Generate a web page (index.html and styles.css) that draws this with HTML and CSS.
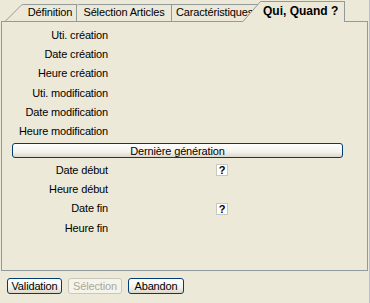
FILE: index.html
```html
<!DOCTYPE html>
<html lang="fr">
<head>
<meta charset="utf-8">
<title>Qui, Quand ?</title>
<link rel="stylesheet" href="styles.css">
</head>
<body>
<div class="window">
  <div class="tabs">
    <svg class="slant-first" width="24" height="21" viewBox="0 0 24 21"><path d="M5.5 21 L21 5.5 Q22 4.5 24 4.5" stroke="#919B9C" fill="none"/></svg>
    <div class="tab t1">Définition</div>
    <div class="tab t2">Sélection Articles</div>
    <div class="tab t3">Caractéristiques</div>
    <div class="tab-active">
      <svg class="slant" width="19" height="21" viewBox="0 0 19 21"><polygon points="0,21 19,0 19,21" fill="#ECE9D8"/><path d="M0.5 21 L18.5 0.5 L19 0.5" stroke="#919B9C" fill="none"/></svg>
      <div class="active-label">Qui, Quand ?</div>
    </div>
  </div>
  <div class="panel">
    <div class="form">
      <div class="lbl">Uti. création</div><div class="fld"></div>
      <div class="lbl">Date création</div><div class="fld"></div>
      <div class="lbl">Heure création</div><div class="fld"></div>
      <div class="lbl">Uti. modification</div><div class="fld"></div>
      <div class="lbl">Date modification</div><div class="fld"></div>
      <div class="lbl">Heure modification</div><div class="fld"></div>
      <button class="wide-btn">Dernière génération</button>
      <div class="lbl">Date début</div><div class="fld"><span class="help">?</span></div>
      <div class="lbl">Heure début</div><div class="fld"></div>
      <div class="lbl">Date fin</div><div class="fld"><span class="help">?</span></div>
      <div class="lbl">Heure fin</div><div class="fld"></div>
    </div>
  </div>
  <div class="footer">
    <button class="btn b-valid">Validation</button>
    <button class="btn b-sel" disabled>Sélection</button>
    <button class="btn b-aband">Abandon</button>
  </div>
</div>
</body>
</html>
```

FILE: styles.css
```css
html, body {
  margin: 0;
  padding: 0;
}
body {
  width: 370px;
  height: 303px;
  background: #ECE9D8;
  font-family: "Liberation Sans", Arial, sans-serif;
  font-size: 11px;
  letter-spacing: -0.15px;
  color: #000;
  overflow: hidden;
}
.window {
  width: 370px;
  height: 303px;
  box-sizing: border-box;
  border-right: 1px solid #A9C0EC;
  display: flex;
  flex-direction: column;
}
.tabs {
  display: flex;
  align-items: flex-end;
  height: 21px;
  flex: none;
}
.slant-first {
  display: block;
  flex: none;
}
.tab {
  box-sizing: border-box;
  height: 17px;
  border-top: 1px solid #919B9C;
  border-right: 1px solid #919B9C;
  padding-top: 1px;
  line-height: 13px;
  white-space: nowrap;
  flex: none;
}
.t1 { width: 53px; text-align: center; }
.t2 { width: 95px; text-align: center; border-top-left-radius: 2px; }
.t3 { width: 90px; padding-left: 4px; overflow: hidden; border-right: none; }
.tab-active {
  position: relative;
  display: flex;
  height: 21px;
  margin-left: -20px;
  margin-bottom: -1px;
  flex: none;
}
.slant {
  display: block;
  flex: none;
}
.active-label {
  box-sizing: border-box;
  width: 84px;
  height: 21px;
  border-top: 1px solid #919B9C;
  border-right: 1px solid #919B9C;
  background: #ECE9D8;
  padding: 3px 0 0 2px;
  line-height: 13px;
  font-size: 12px;
  font-weight: bold;
  letter-spacing: 0;
  white-space: nowrap;
}
.panel {
  box-sizing: border-box;
  margin-left: 1px;
  width: 367px;
  height: 250px;
  border: 1px solid #919B9C;
  flex: none;
}
.form {
  display: grid;
  grid-template-columns: 106px 1fr;
  grid-auto-rows: 19.3px;
  align-items: center;
  padding-top: 3.5px;
}
.lbl {
  text-align: right;
  white-space: nowrap;
  line-height: 13px;
}
.fld {
  display: flex;
  align-items: center;
}
.help {
  box-sizing: border-box;
  margin-left: 108px;
  width: 12px;
  height: 12px;
  border: 1px solid #C8C8C0;
  background: #fff;
  font-weight: bold;
  font-size: 11px;
  line-height: 10px;
  letter-spacing: 0;
  text-align: center;
}
.wide-btn {
  grid-column: 1 / 3;
  box-sizing: border-box;
  margin-left: 10px;
  width: 331px;
  height: 15px;
  border: 1px solid #003C74;
  border-radius: 3px;
  background: linear-gradient(#FFFFFF, #F3F2EC 60%, #DCD7CB);
  font-family: "Liberation Sans", Arial, sans-serif;
  font-size: 11px;
  letter-spacing: -0.15px;
  line-height: 12px;
  padding: 0;
  color: #000;
}
.footer {
  display: flex;
  gap: 6px;
  padding: 7px 0 0 7px;
}
.btn {
  box-sizing: border-box;
  height: 16px;
  border: 1px solid #003C74;
  border-radius: 3px;
  background: linear-gradient(#FFFFFF, #F3F2EC 60%, #DCD7CB);
  font-family: "Liberation Sans", Arial, sans-serif;
  font-size: 11px;
  letter-spacing: -0.15px;
  line-height: 13px;
  padding: 0;
  color: #000;
}
.b-valid { width: 55px; }
.b-sel {
  width: 54px;
  border-color: #C9C7BA;
  background: #F5F4EA;
  color: #ACA899;
}
.b-aband { width: 56px; }
```
